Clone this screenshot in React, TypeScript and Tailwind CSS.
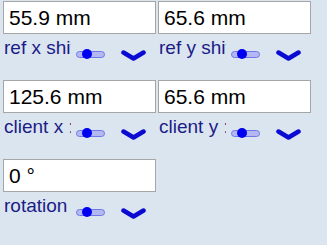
const fields = [
  { value: "55.9 mm", label: "ref x shift" },
  { value: "65.6 mm", label: "ref y shift" },
  { value: "125.6 mm", label: "client x :" },
  { value: "65.6 mm", label: "client y :" },
  { value: "0 °", label: "rotation" },
];

function Toggle() {
  return (
    <div className="relative mt-[11px] ml-[5px] h-[10px] w-[29px] shrink-0">
      <div className="absolute left-0 top-[2px] h-[7px] w-[29px] rounded-full border border-[#6f78e6] bg-[#b3b8f2]" />
      <div className="absolute left-[6px] top-0 h-[10px] w-[10px] rounded-full bg-[#0000f0]" />
    </div>
  );
}

function Chevron() {
  return (
    <svg className="mt-[12px] ml-[16px] shrink-0" width="25" height="11" viewBox="0 0 25 11">
      <polyline
        points="2.5,2.5 12.5,8.5 22.5,2.5"
        fill="none"
        stroke="#0a0ad2"
        strokeWidth="4.5"
        strokeLinecap="round"
        strokeLinejoin="round"
      />
    </svg>
  );
}

function Field({ value, label }: { value: string; label: string }) {
  return (
    <div className="flex h-[79px] flex-col">
      <div className="flex h-[33px] w-[153px] items-center border border-[#a6a6a6] bg-white pl-[5px] text-[21px] leading-none text-black">
        {value}
      </div>
      <div className="mt-[4px] flex items-start">
        <span className="ml-[1px] w-[67px] overflow-hidden whitespace-nowrap text-[19px] leading-[20px] text-[#1c1c86]">
          {label}
        </span>
        <Toggle />
        <Chevron />
      </div>
    </div>
  );
}

export default function App() {
  return (
    <div
      className="h-[245px] w-[327px] bg-[#dbe5f0] pl-[3px] pt-[1px]"
      style={{ fontFamily: '"Liberation Sans", Arial, sans-serif' }}
    >
      <div className="grid grid-cols-[153px_153px] gap-x-[2px]">
        {fields.map((f, i) => (
          <Field key={i} value={f.value} label={f.label} />
        ))}
      </div>
    </div>
  );
}
